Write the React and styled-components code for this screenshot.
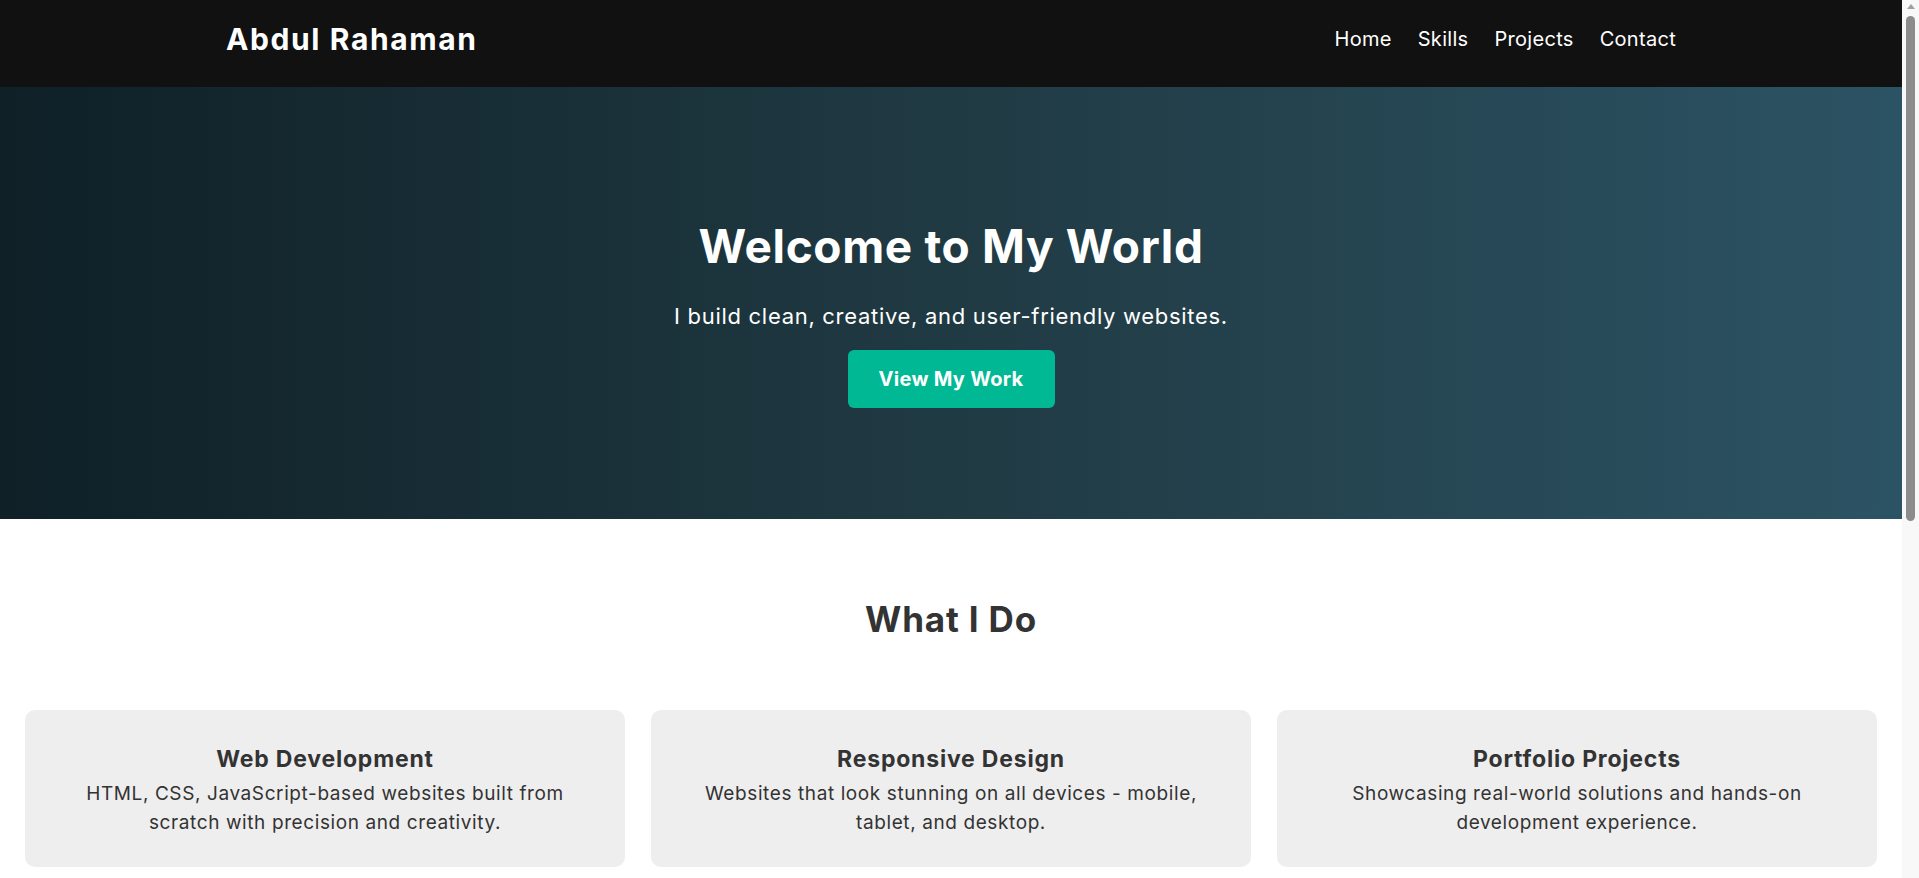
import React from "react";
import styled, { createGlobalStyle } from "styled-components";

const GlobalStyle = createGlobalStyle`
  *, *::before, *::after { box-sizing: border-box; }
  html, body { margin: 0; padding: 0; }
  body {
    font-family: Inter, "Liberation Sans", sans-serif;
    background: #ffffff;
    color: #333333;
  }
`;

const Page = styled.div`
  width: calc(100% - 17px);
  min-height: 1440px;
  background: #ffffff;
`;

const ScrollTrack = styled.div`
  position: fixed;
  top: 0;
  right: 0;
  width: 17px;
  height: 100vh;
  background: #f8f8f8;
  display: flex;
  flex-direction: column;
  align-items: center;
  padding-top: 4px;
  z-index: 10;
`;

const ScrollArrow = styled.div`
  width: 0;
  height: 0;
  border-left: 4px solid transparent;
  border-right: 4px solid transparent;
  border-bottom: 5px solid #a0a0a0;
`;

const ScrollThumb = styled.div`
  margin-top: 7px;
  width: 9px;
  height: 505px;
  border-radius: 5px;
  background: #8c8c8c;
`;

const Header = styled.header`
  background: #111111;
  height: 87px;
  padding-bottom: 10px;
  display: flex;
`;

const HeaderInner = styled.div`
  width: 100%;
  max-width: 1450px;
  margin: 0 auto;
  display: flex;
  align-items: center;
  justify-content: space-between;
`;

const Logo = styled.div`
  font-size: 30px;
  font-weight: 700;
  color: #ffffff;
  letter-spacing: 1.6px;
`;

const Nav = styled.nav`
  display: flex;
  gap: 26px;
`;

const NavLink = styled.a`
  color: #ffffff;
  text-decoration: none;
  font-size: 20px;
  letter-spacing: 0.3px;
`;

const Hero = styled.section`
  background: linear-gradient(to right, #0f2027, #203a43, #2c5364);
  padding: 131px 20px 111px;
  text-align: center;
  color: #ffffff;
`;

const HeroTitle = styled.h1`
  margin: 0;
  font-size: 46px;
  line-height: 56px;
  font-weight: 700;
  letter-spacing: 0.65px;
`;

const HeroText = styled.p`
  margin: 27px 0 0;
  font-size: 22px;
  line-height: 30px;
  letter-spacing: 0.7px;
`;

const HeroButton = styled.a`
  display: flex;
  align-items: center;
  justify-content: center;
  width: 207px;
  height: 58px;
  margin: 19px auto 0;
  background: #00b894;
  color: #ffffff;
  border-radius: 6px;
  font-size: 20px;
  font-weight: 700;
  letter-spacing: 0.3px;
  text-decoration: none;
`;

const Services = styled.section`
  padding: 79px 25px 60px;
`;

const SectionTitle = styled.h2`
  margin: 0 0 70px;
  text-align: center;
  font-size: 35px;
  line-height: 42px;
  font-weight: 700;
  letter-spacing: 0.85px;
  color: #333333;
`;

const CardGrid = styled.div`
  display: grid;
  grid-template-columns: repeat(3, 1fr);
  gap: 26px;
`;

const Card = styled.div`
  background: #eeeeee;
  border-radius: 10px;
  padding: 30px;
  text-align: center;
`;

const CardTitle = styled.h3`
  margin: 0;
  font-size: 23px;
  line-height: 39px;
  font-weight: 700;
  letter-spacing: 0.8px;
  color: #333333;
`;

const CardText = styled.p`
  margin: 0;
  font-size: 19px;
  line-height: 29px;
  color: #333333;
  letter-spacing: 0.6px;
`;

const services = [
  {
    title: "Web Development",
    text: "HTML, CSS, JavaScript-based websites built from scratch with precision and creativity.",
  },
  {
    title: "Responsive Design",
    text: "Websites that look stunning on all devices - mobile, tablet, and desktop.",
  },
  {
    title: "Portfolio Projects",
    text: "Showcasing real-world solutions and hands-on development experience.",
  },
];

export default function App() {
  return (
    <Page>
      <GlobalStyle />
      <ScrollTrack>
        <ScrollArrow />
        <ScrollThumb />
      </ScrollTrack>
      <Header>
        <HeaderInner>
          <Logo>Abdul Rahaman</Logo>
          <Nav>
            <NavLink href="#home">Home</NavLink>
            <NavLink href="#skills">Skills</NavLink>
            <NavLink href="#projects">Projects</NavLink>
            <NavLink href="#contact">Contact</NavLink>
          </Nav>
        </HeaderInner>
      </Header>
      <Hero id="home">
        <HeroTitle>Welcome to My World</HeroTitle>
        <HeroText>I build clean, creative, and user-friendly websites.</HeroText>
        <HeroButton href="#projects">View My Work</HeroButton>
      </Hero>
      <Services id="skills">
        <SectionTitle>What I Do</SectionTitle>
        <CardGrid>
          {services.map((s) => (
            <Card key={s.title}>
              <CardTitle>{s.title}</CardTitle>
              <CardText>{s.text}</CardText>
            </Card>
          ))}
        </CardGrid>
      </Services>
    </Page>
  );
}
